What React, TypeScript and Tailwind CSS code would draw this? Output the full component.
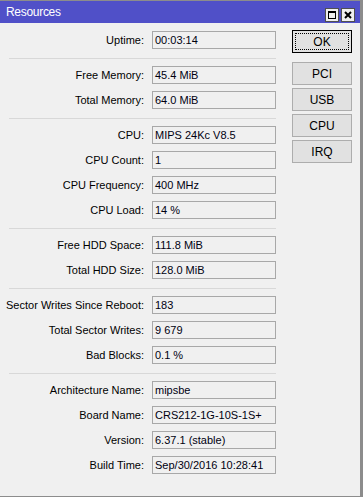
import React from "react";

// ─── Resources window ─────────────────────────────────────────────────────────

type Row = { label: string; value: string };

const groups: Row[][] = [
  [{ label: "Uptime:", value: "00:03:14" }],
  [
    { label: "Free Memory:", value: "45.4 MiB" },
    { label: "Total Memory:", value: "64.0 MiB" },
  ],
  [
    { label: "CPU:", value: "MIPS 24Kc V8.5" },
    { label: "CPU Count:", value: "1" },
    { label: "CPU Frequency:", value: "400 MHz" },
    { label: "CPU Load:", value: "14 %" },
  ],
  [
    { label: "Free HDD Space:", value: "111.8 MiB" },
    { label: "Total HDD Size:", value: "128.0 MiB" },
  ],
  [
    { label: "Sector Writes Since Reboot:", value: "183" },
    { label: "Total Sector Writes:", value: "9 679" },
    { label: "Bad Blocks:", value: "0.1 %" },
  ],
  [
    { label: "Architecture Name:", value: "mipsbe" },
    { label: "Board Name:", value: "CRS212-1G-10S-1S+" },
    { label: "Version:", value: "6.37.1 (stable)" },
    { label: "Build Time:", value: "Sep/30/2016 10:28:41" },
  ],
];

const buttons = ["PCI", "USB", "CPU", "IRQ"];

const btnCls =
  "flex h-[23px] w-[60px] items-center justify-center border border-[#adadad] bg-[#e1e1e1] text-[12px] text-black";

function Field({ label, value }: Row) {
  return (
    <div className="flex h-[18px] items-center">
      <span className="w-[144px] text-right text-[11px] leading-none text-black">{label}</span>
      <div className="ml-[8px] flex h-[18px] w-[124px] items-center border border-[#a8a8a8] bg-[#f0f0f0] pl-[2px] text-[11px] leading-none text-[#000010]">
        {value}
      </div>
    </div>
  );
}

function TitleButton({ kind }: { kind: "max" | "close" }) {
  return (
    <div className="flex h-[14px] w-[14px] items-center justify-center border border-[#505050] bg-[#f0f0f0]">
      {kind === "max" ? (
        <svg width="10" height="10" viewBox="0 0 10 10">
          <rect x="1.5" y="1.5" width="7" height="7" fill="none" stroke="#000" strokeWidth="1" />
          <rect x="1" y="1" width="8" height="2" fill="#000" />
        </svg>
      ) : (
        <svg width="10" height="10" viewBox="0 0 10 10">
          <path d="M2 2 L8 8 M8 2 L2 8" stroke="#000" strokeWidth="2" />
        </svg>
      )}
    </div>
  );
}

export default function App() {
  return (
    <div
      className="flex h-[497px] w-[363px] flex-col border-t border-r-[3px] border-b border-[#8c8c8c] bg-[#f0f0f0]"
      style={{ fontFamily: '"Liberation Sans", Arial, sans-serif' }}
    >
      <div className="flex h-[22px] items-center justify-between bg-[#5050c8] pl-[6px] pr-[5px]">
        <span className="text-[12px] tracking-[-0.3px] text-white">Resources</span>
        <div className="mb-[1px] flex gap-[2px] self-end">
          <TitleButton kind="max" />
          <TitleButton kind="close" />
        </div>
      </div>

      <div className="flex flex-1">
        <div className="flex flex-col pt-[8px]">
          {groups.map((g, gi) => (
            <div key={gi} className="flex flex-col">
              {gi > 0 && <div className="mb-[7px] mt-[9px] ml-[9px] h-px w-[267px] bg-[#d8d8d8]" />}
              <div className="flex flex-col gap-[7px]">
                {g.map((r) => (
                  <Field key={r.label} {...r} />
                ))}
              </div>
            </div>
          ))}
        </div>

        <div className="ml-[16px] flex flex-col pt-[7px]">
          <div className="flex h-[23px] w-[60px] items-center justify-center border border-black bg-[#e1e1e1] p-[2px]">
            <div className="flex h-full w-full items-center justify-center border border-dotted border-black text-[12px] text-black">
              OK
            </div>
          </div>
          <div className="mt-[9px] flex flex-col gap-[3px]">
            {buttons.map((b) => (
              <div key={b} className={btnCls}>
                {b}
              </div>
            ))}
          </div>
        </div>
      </div>
    </div>
  );
}
